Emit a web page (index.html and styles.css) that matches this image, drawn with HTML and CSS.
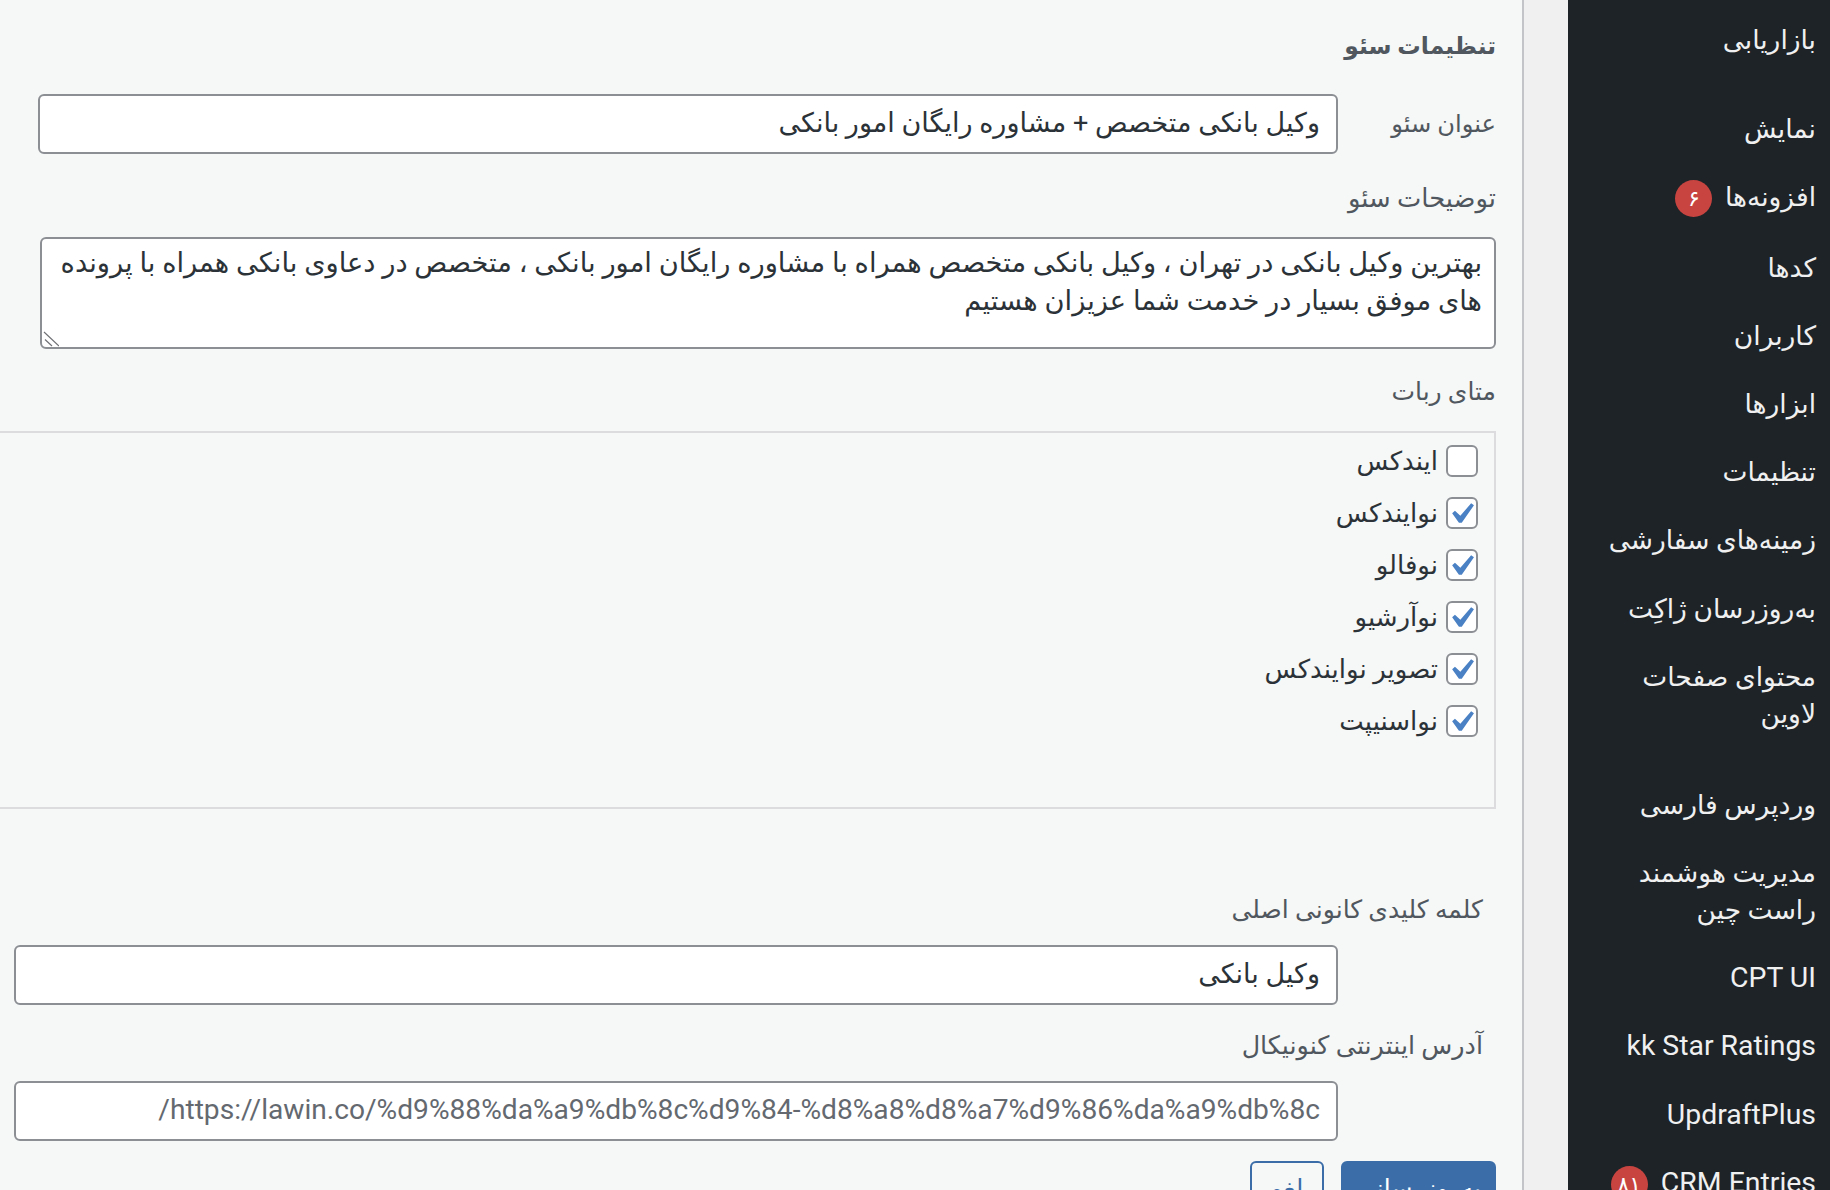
FILE: index.html
```html
<!DOCTYPE html>
<html lang="fa" dir="rtl">
<head>
<meta charset="utf-8">
<title>تنظیمات سئو</title>
<link rel="stylesheet" href="styles.css">
</head>
<body>
<div class="layout">
  <nav class="sidebar">
    <ul class="menu">
      <li class="item first">بازاریابی</li>
      <li class="item sep">نمایش</li>
      <li class="item">افزونه‌ها <span class="badge">۶</span></li>
      <li class="item">کدها</li>
      <li class="item">کاربران</li>
      <li class="item">ابزارها</li>
      <li class="item">تنظیمات</li>
      <li class="item">زمینه‌های سفارشی</li>
      <li class="item">به‌روزرسان ژاکِت</li>
      <li class="item">محتوای صفحات لاوین</li>
      <li class="item sep wide-sep">وردپرس فارسی</li>
      <li class="item">مدیریت هوشمند راست چین</li>
      <li class="item latin">CPT UI</li>
      <li class="item latin">kk Star Ratings</li>
      <li class="item latin">UpdraftPlus</li>
      <li class="item latin"><span dir="ltr">CRM Entries</span> <span class="badge">۸۱</span></li>
    </ul>
  </nav>
  <div class="gutter"></div>
  <main class="panel">
    <h2 class="heading">تنظیمات سئو</h2>
    <div class="title-row">
      <label class="field-label title-label">عنوان سئو</label>
      <input class="text-input" type="text" value="وکیل بانکی متخصص + مشاوره رایگان امور بانکی">
    </div>
    <label class="field-label desc-label">توضیحات سئو</label>
    <div class="desc-wrap">
      <textarea class="desc-input">بهترین وکیل بانکی در تهران ، وکیل بانکی متخصص همراه با مشاوره رایگان امور بانکی ، متخصص در دعاوی بانکی همراه با پرونده های موفق بسیار در خدمت شما عزیزان هستیم</textarea>
      <svg class="grip" viewBox="0 0 17 16"><path d="M2 1l15 14M3 8.500l7 6.500"/></svg>
    </div>
    <label class="field-label robot-label">متای ربات</label>
    <div class="robots">
      <div class="check"><span class="box"></span><span>ایندکس</span></div>
      <div class="check"><span class="box"><svg viewBox="0 0 20 20"><path d="M14.83 4.89l1.34.94-5.81 8.38H9.02L5.78 9.67l1.34-1.25 2.57 2.4z"/></svg></span><span>نوایندکس</span></div>
      <div class="check"><span class="box"><svg viewBox="0 0 20 20"><path d="M14.83 4.89l1.34.94-5.81 8.38H9.02L5.78 9.67l1.34-1.25 2.57 2.4z"/></svg></span><span>نوفالو</span></div>
      <div class="check"><span class="box"><svg viewBox="0 0 20 20"><path d="M14.83 4.89l1.34.94-5.81 8.38H9.02L5.78 9.67l1.34-1.25 2.57 2.4z"/></svg></span><span>نوآرشیو</span></div>
      <div class="check"><span class="box"><svg viewBox="0 0 20 20"><path d="M14.83 4.89l1.34.94-5.81 8.38H9.02L5.78 9.67l1.34-1.25 2.57 2.4z"/></svg></span><span>تصویر نوایندکس</span></div>
      <div class="check"><span class="box"><svg viewBox="0 0 20 20"><path d="M14.83 4.89l1.34.94-5.81 8.38H9.02L5.78 9.67l1.34-1.25 2.57 2.4z"/></svg></span><span>نواسنیپت</span></div>
    </div>
    <label class="field-label canon-label">کلمه کلیدی کانونی اصلی</label>
    <input class="text-input wide" type="text" value="وکیل بانکی">
    <label class="field-label canon-label url-label">آدرس اینترنتی کنونیکال</label>
    <input class="text-input wide url" type="text" placeholder="https://lawin.co/%d9%88%da%a9%db%8c%d9%84-%d8%a8%d8%a7%d9%86%da%a9%db%8c/">
    <div class="actions">
      <button class="btn primary" type="button">به‌روزرسانی</button>
      <button class="btn cancel" type="button">لغو</button>
    </div>
  </main>
</div>
</body>
</html>
```
FILE: styles.css
```css
* { box-sizing: border-box; }
html, body { margin: 0; height: 1190px; overflow: hidden; }
body {
  font-family: Roboto, "DejaVu Sans", sans-serif;
  font-size: 26px;
  color: #3c434a;
  background: #f0f0f1;
}
.layout { display: flex; height: 1190px; }

.sidebar {
  flex: 0 0 262px;
  background: #1d2327;
  color: #f0f0f1;
  overflow: hidden;
}
.menu { list-style: none; margin: 0; padding: 0; }
.item {
  padding: 15.600px 14px 15.600px 38px;
  line-height: 37px;
  font-size: 26.500px;
}
.item.latin { font-size: 28.400px; padding-left: 8px; }
.item.first { padding-top: 20.500px; }
.item.sep { margin-top: 21px; }
.item.wide-sep { margin-top: 23px; }
.badge {
  display: inline-block;
  width: 37px;
  height: 37px;
  margin-right: 6px;
  border-radius: 50%;
  background: #c74440;
  color: #fff;
  font-size: 22px;
  line-height: 37px;
  text-align: center;
  vertical-align: middle;
}

.gutter { flex: 0 0 44px; }

.panel {
  flex: 0 0 1524px;
  min-width: 0;
  height: 1190px;
  padding: 28px 26px 0 0;
  background: #f6f7f7;
  border-right: 2px solid #c3c4c7;
  overflow: hidden;
}
.heading {
  margin: 0;
  font-size: 23.400px;
  line-height: 37px;
  font-weight: 700;
  color: #50575e;
}
.field-label { display: block; line-height: 37px; color: #50575e; font-size: 25px; }
.title-row { display: flex; align-items: center; margin: 29px 0 0 38px; }
.title-label { flex: 0 0 158px; font-size: 24.200px; }
.text-input {
  display: block;
  height: 60px;
  padding: 0 16px 2px;
  border: 2px solid #8c8f94;
  border-radius: 6px;
  background: #fff;
  color: #2c3338;
  font: 27px Roboto, "DejaVu Sans", sans-serif;
  outline: 0;
}
.title-row .text-input { flex: 1; min-width: 0; }
.desc-label { margin-top: 26px; font-size: 25.800px; }
.desc-wrap { position: relative; width: 1456px; height: 112px; margin: 20px 0 0 40px; }
.desc-input {
  display: block;
  width: 100%;
  height: 100%;
  padding: 6px 12px;
  border: 2px solid #8c8f94;
  border-radius: 6px;
  background: #fff;
  color: #2c3338;
  font: 27.300px/37.500px Roboto, "DejaVu Sans", sans-serif;
  outline: 0;
  resize: none;
}
.grip {
  position: absolute;
  left: 2px;
  bottom: 2px;
  width: 17px;
  height: 16px;
  fill: none;
  stroke: #6f7175;
  stroke-width: 1.200px;
}
.robot-label { margin-top: 24px; }
.robots {
  display: flex;
  flex-direction: column;
  gap: 20px;
  height: 378px;
  margin-top: 21px;
  padding: 12px 16px 0 0;
  border: 2px solid #dcdcde;
  border-left: 0;
}
.check { display: flex; align-items: center; gap: 8px; height: 32px; font-size: 26px; color: #2c3338; }
.box {
  flex: 0 0 32px;
  width: 32px;
  height: 32px;
  border: 2px solid #8c8f94;
  border-radius: 6px;
  background: #fff;
}
.box svg { display: block; width: 42px; height: 42px; margin: -6px; fill: #4a80c4; }
.canon-label { margin: 82px 13px 0 0; }
.url-label { margin-top: 22px; font-size: 25.400px; }
.wide { width: 1324px; margin: 17px 158px 0 0; }
.url { font-size: 28.150px; padding-bottom: 4px; }
.url::placeholder { color: #646970; opacity: 1; }
.actions { display: flex; gap: 17px; margin-top: 20px; }
.btn {
  height: 54px;
  border: 2px solid #3b6ea8;
  border-radius: 6px;
  font: 25px Roboto, "DejaVu Sans", sans-serif;
  padding: 0;
}
.primary { width: 155px; background: #3b6ea8; color: #fff; }
.cancel { width: 74px; background: #f6f7f7; color: #3b6ea8; }
```
